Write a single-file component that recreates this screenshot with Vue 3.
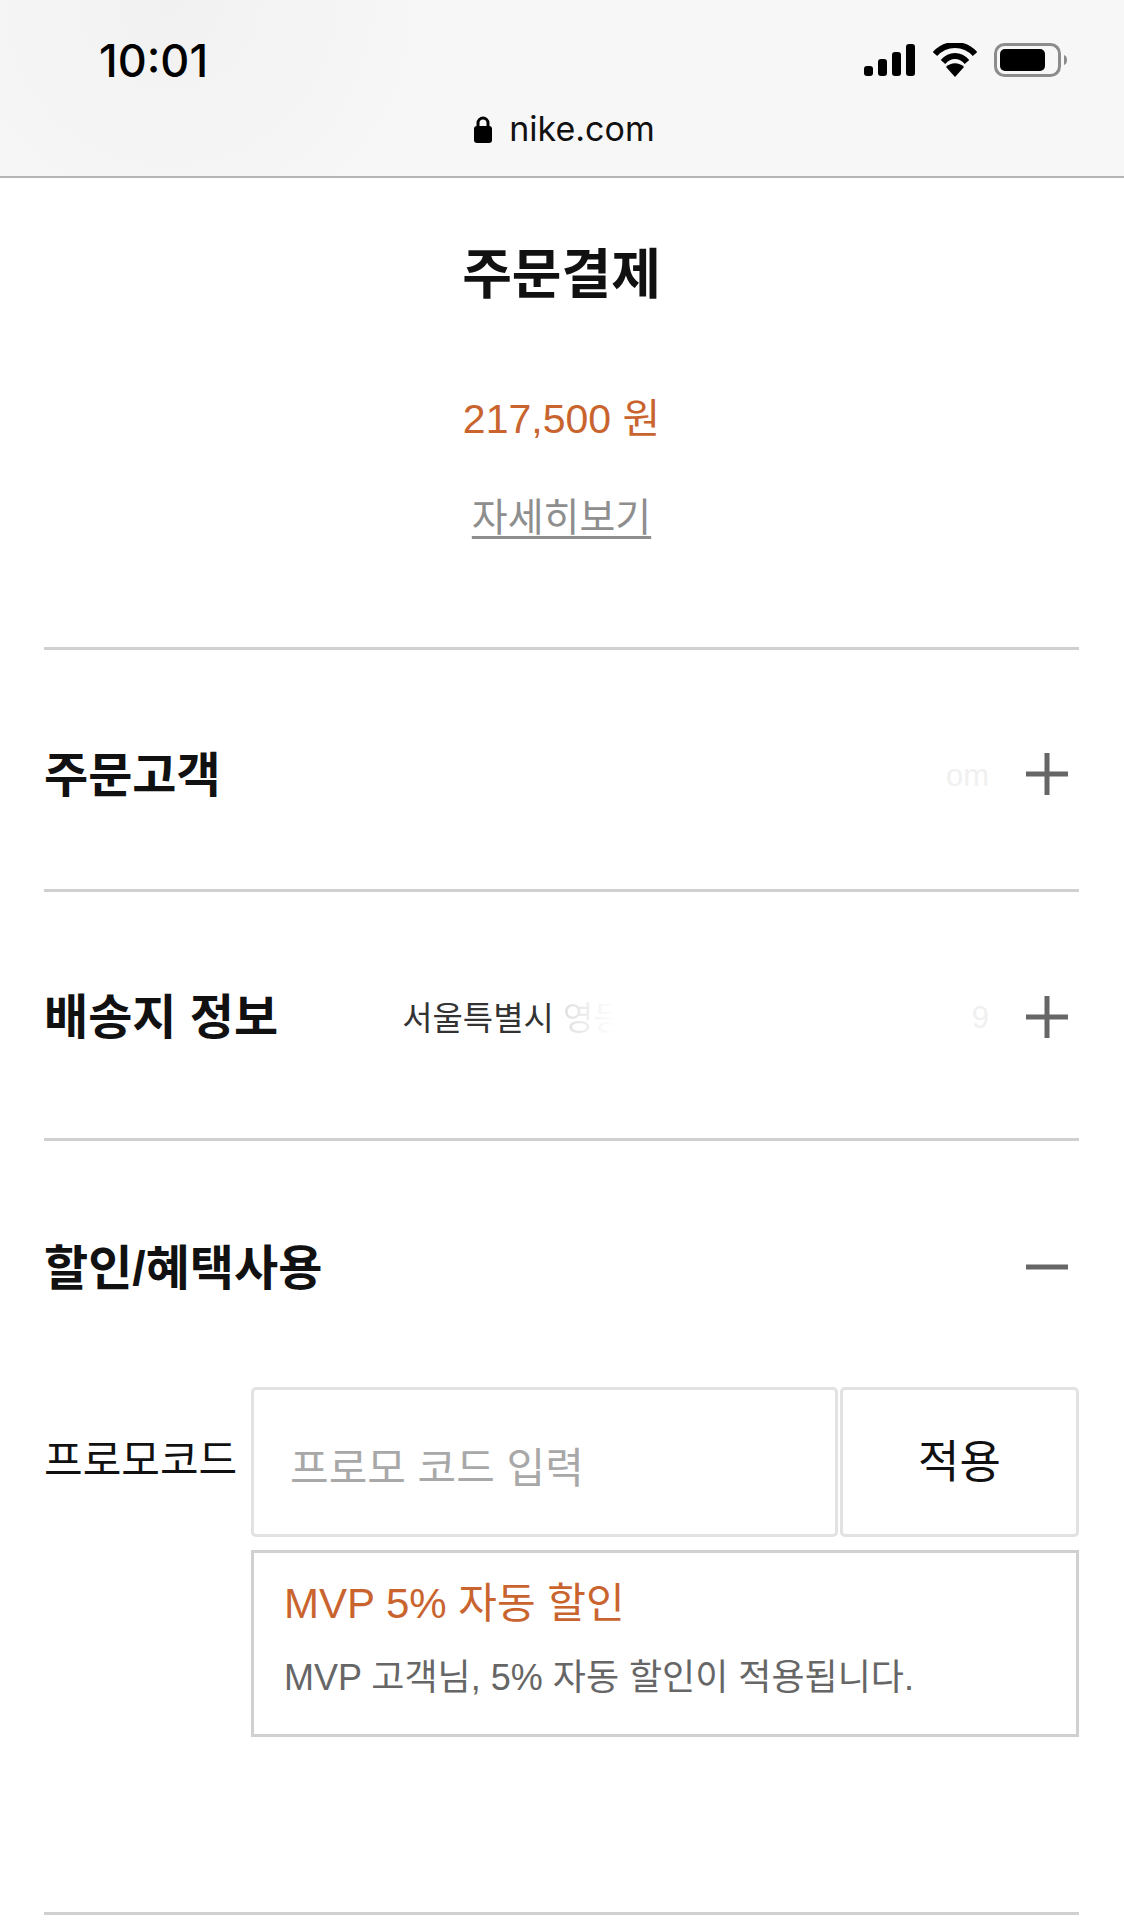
<template>
  <div class="page">
    <header class="browser">
      <div class="status">
        <span class="time">10:01</span>
        <div class="status-icons">
          <svg width="52" height="32" viewBox="0 0 52 32" fill="#000">
            <rect x="0" y="22" width="9" height="10" rx="3" />
            <rect x="14" y="15" width="9" height="17" rx="3" />
            <rect x="28" y="8" width="9" height="24" rx="3" />
            <rect x="42" y="0" width="9" height="32" rx="3" />
          </svg>
          <svg width="44" height="34" viewBox="0 0 44 34" fill="none">
            <path d="M2 11C13-1 31-1 42 11" stroke="#000" stroke-width="6" />
            <path d="M10 19C17 11 27 11 34 19" stroke="#000" stroke-width="6" />
            <path d="M13 24C18 19 26 19 31 24L22 34Z" fill="#000" />
          </svg>
          <svg width="75" height="34" viewBox="0 0 75 34" fill="none">
            <rect x="1.5" y="1.5" width="64" height="31" rx="9" stroke="#8c8c8c" stroke-width="3" />
            <rect x="6" y="6" width="45" height="22" rx="5" fill="#000" />
            <path d="M70 12C74 13 74 21 70 22Z" fill="#8c8c8c" />
          </svg>
        </div>
      </div>
      <div class="address">
        <svg width="18" height="28" viewBox="0 0 18 28" fill="none">
          <path d="M4 13V8a5 5 0 0 1 10 0v5" stroke="#000" stroke-width="3" />
          <rect x="0" y="11" width="18" height="17" rx="3" fill="#000" />
        </svg>
        <span>nike.com</span>
      </div>
    </header>

    <main class="content">
      <section class="summary">
        <h1>주문결제</h1>
        <p class="amount">217,500 원</p>
        <a class="detail">자세히보기</a>
      </section>

      <section class="row customer">
        <h2>주문고객</h2>
        <span class="peek end">om</span>
        <svg class="toggle" width="44" height="44" viewBox="0 0 44 44"><path d="M1 22H43M22 1V43" /></svg>
      </section>

      <section class="row shipping">
        <h2>배송지 정보</h2>
        <span class="address-text">서울특별시 <span class="fade">영등</span></span>
        <span class="peek end">9</span>
        <svg class="toggle" width="44" height="44" viewBox="0 0 44 44"><path d="M1 22H43M22 1V43" /></svg>
      </section>

      <section class="discount">
        <div class="row-head">
          <h2>할인/혜택사용</h2>
          <svg class="toggle" width="44" height="44" viewBox="0 0 44 44"><path d="M1 22H43" /></svg>
        </div>
        <div class="promo">
          <label>프로모코드</label>
          <div class="promo-body">
            <div class="promo-form">
              <div class="promo-input">프로모 코드 입력</div>
              <button class="promo-btn">적용</button>
            </div>
            <div class="notice">
              <div class="notice-title">MVP 5% 자동 할인</div>
              <div class="notice-text">MVP 고객님, 5% 자동 할인이 적용됩니다.</div>
            </div>
          </div>
        </div>
      </section>
    </main>
  </div>
</template>

<script setup>
</script>

<style>
html, body { margin: 0; background: #fff; }
</style>

<style scoped>
.page {
  width: 1124px;
  height: 1921px;
  overflow: hidden;
  background: #fff;
  font-family: "Liberation Sans", "Noto Sans CJK KR", sans-serif;
  color: #111;
}
.browser {
  height: 176px;
  background: radial-gradient(circle at 170px 0, #f1f1f1, #f7f7f7 260px);
  border-bottom: 2px solid #b4b4b4;
}
.status {
  display: flex;
  justify-content: space-between;
  align-items: center;
  height: 60px;
  padding: 30px 55px 0 99px;
}
.time {
  font-family: Inter, sans-serif;
  font-size: 45px;
  font-weight: 500;
  color: #000;
}
.status-icons { display: flex; align-items: center; gap: 17px; }
.address {
  display: flex;
  justify-content: center;
  align-items: center;
  gap: 17px;
  margin-top: 18px;
  padding-left: 5px;
  font-family: Inter, sans-serif;
  font-size: 34px;
  color: #111;
}
.content { padding: 0 45px 0 44px; }
.summary {
  display: flex;
  flex-direction: column;
  align-items: center;
  height: 469px;
  border-bottom: 3px solid #d0d0d0;
}
h1 {
  margin: 65px 0 0;
  font-size: 54px;
  line-height: 64px;
  font-weight: 700;
}
.amount {
  margin: 88px 0 0;
  font-size: 41px;
  line-height: 48px;
  color: #c9642f;
}
.detail {
  margin-top: 51px;
  font-size: 39px;
  line-height: 48px;
  color: #8e8e8e;
  text-decoration: underline;
  text-underline-offset: 5px;
}
h2 { margin: 0; font-size: 48px; line-height: 60px; font-weight: 700; }
.row {
  display: flex;
  align-items: center;
  border-bottom: 3px solid #d0d0d0;
  padding-right: 10px;
}
.customer { height: 227px; padding-top: 12px; }
.shipping { height: 240px; padding-top: 6px; }
.address-text {
  margin-left: 124px;
  padding-bottom: 4px;
  font-size: 33px;
  color: #333;
  white-space: nowrap;
}
.fade {
  background: linear-gradient(90deg, #dedede, #f4f4f4 55%, #fff 85%);
  -webkit-background-clip: text;
  background-clip: text;
  color: transparent;
}
.peek { font-size: 31px; color: #f0f0f0; }
.end { margin-left: auto; margin-right: 36px; }
.toggle { fill: none; stroke: #666; stroke-width: 5px; flex-shrink: 0; }
.row .toggle { margin-bottom: 3px; }
.row-head {
  display: flex;
  justify-content: space-between;
  align-items: center;
  height: 241px;
  padding: 5px 10px 0 0;
}
.row-head h2 { padding-top: 4px; }
.promo { display: flex; align-items: flex-start; }
.promo label {
  width: 207px;
  flex-shrink: 0;
  margin-top: 46px;
  font-size: 42px;
  line-height: 56px;
}
.promo-body { flex: 1; }
.promo-form { display: flex; gap: 2px; height: 150px; }
.promo-input, .promo-btn {
  box-sizing: border-box;
  border: 3px solid #e2e2e2;
  border-radius: 5px;
  background: #fff;
  font-family: inherit;
}
.promo-input {
  width: 587px;
  padding: 51px 0 0 36px;
  font-size: 42px;
  line-height: 56px;
  color: #a8a8a8;
}
.promo-btn {
  flex: 1;
  padding: 0 0 8px;
  font-size: 45px;
  color: #111;
}
.notice {
  box-sizing: border-box;
  height: 187px;
  margin-top: 13px;
  padding: 23px 30px 0;
  border: 3px solid #d0d0d0;
}
.notice-title { font-size: 42px; line-height: 56px; color: #c9642f; }
.notice-text { margin-top: 22px; font-size: 36px; line-height: 48px; color: #666; }
.discount { height: 771px; border-bottom: 3px solid #d0d0d0; }
</style>
